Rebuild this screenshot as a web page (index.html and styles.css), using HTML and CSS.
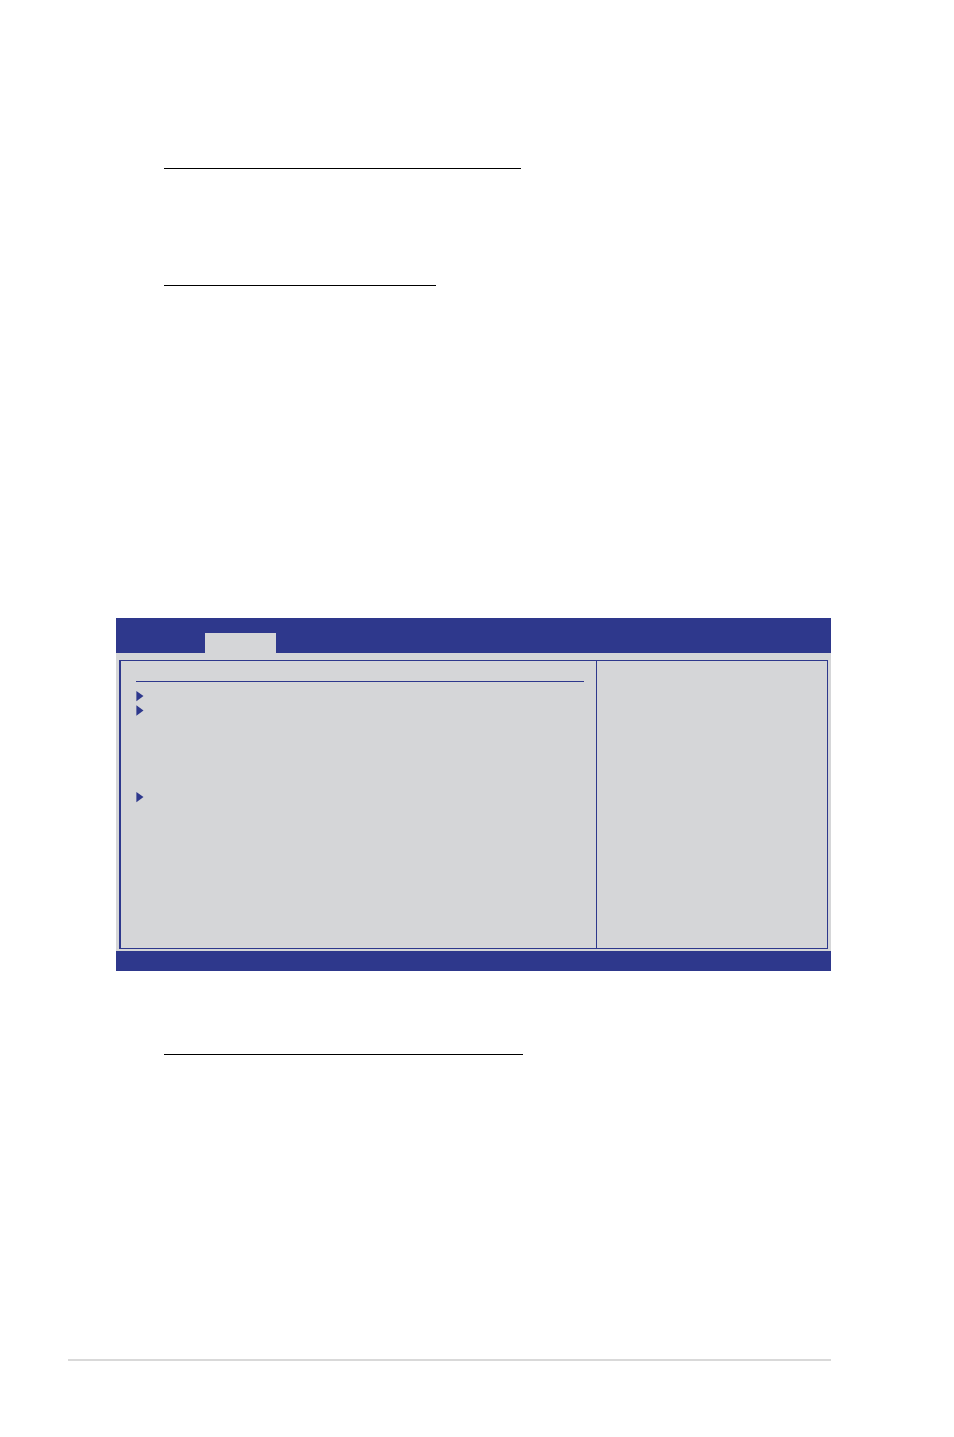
FILE: index.html
```html
<!DOCTYPE html>
<html lang="en">
<head>
  <meta charset="UTF-8">
  <meta name="viewport" content="width=device-width, initial-scale=1.0">
  <title>Setup Screen</title>
  <link rel="stylesheet" href="styles.css">
</head>
<body>
  <main class="page">
    <section class="intro">
      <hr class="rule rule-wide">
      <hr class="rule rule-short">
    </section>

    <section class="screen">
      <div class="menu-bar">
        <div class="tab"></div>
      </div>
      <div class="screen-body">
        <div class="frame">
          <div class="settings">
            <hr class="settings-line">
            <ul class="submenus">
              <li>
                <svg class="arrow" width="8" height="11" viewBox="0 0 8 11"><path d="M0.4 0 L7.5 5.1 L0.4 10.3 Z"/></svg>
              </li>
              <li>
                <svg class="arrow" width="8" height="11" viewBox="0 0 8 11"><path d="M0.4 0.3 L7.5 5.5 L0.4 10.8 Z"/></svg>
              </li>
              <li class="separate">
                <svg class="arrow" width="8" height="11" viewBox="0 0 8 11"><path d="M0.4 0 L7.5 5.1 L0.4 10.3 Z"/></svg>
              </li>
            </ul>
          </div>
          <aside class="help"></aside>
        </div>
      </div>
      <div class="status-bar"></div>
    </section>

    <section class="details">
      <hr class="rule rule-full">
    </section>

    <footer class="footer"></footer>
  </main>
</body>
</html>
```
FILE: styles.css
```css
* {
  box-sizing: border-box;
}

body {
  margin: 0;
  background-color: #ffffff;
  font-family: "Liberation Sans", Arial, sans-serif;
}

.page {
  padding: 168px 123px 76px 68px;
}

/* heading rules */
.intro,
.details {
  padding-left: 96px;
}

.rule {
  height: 1px;
  margin: 0;
  border: 0;
  background-color: #000000;
}

.rule-wide {
  max-width: 357px;
}

.rule-full {
  max-width: 359px;
}

.rule-short {
  max-width: 272px;
  margin-top: 116px;
}

/* setup screen */
.screen {
  margin: 332px 0 83px 48px;
  background-color: #d5d6d8;
}

.menu-bar {
  display: flex;
  align-items: flex-end;
  height: 35px;
  padding-left: 89px;
  background-color: #2e388c;
}

.tab {
  width: 71px;
  height: 20px;
  background-color: #d5d6d8;
}

.screen-body {
  padding: 7px 3px 2px;
}

.frame {
  display: flex;
  min-height: 289px;
  border: 1px solid #2e388c;
  border-left-width: 2px;
}

.settings {
  flex: 1;
  padding: 20px 12px 0 15px;
}

.settings-line {
  height: 1px;
  margin: 0;
  border: 0;
  background-color: #2e388c;
}

.submenus {
  margin: 9px 0 0;
  padding: 0;
  list-style: none;
}

.submenus li {
  display: flex;
  margin-bottom: 3px;
}

.submenus .separate {
  margin-top: 76px;
}

.arrow {
  fill: #2e388c;
}

.help {
  width: 231px;
  border-left: 1px solid #2e388c;
}

.status-bar {
  height: 20px;
  background-color: #2e388c;
}

.footer {
  margin-top: 304px;
  border-top: 2px solid #d9d9d9;
}
```
